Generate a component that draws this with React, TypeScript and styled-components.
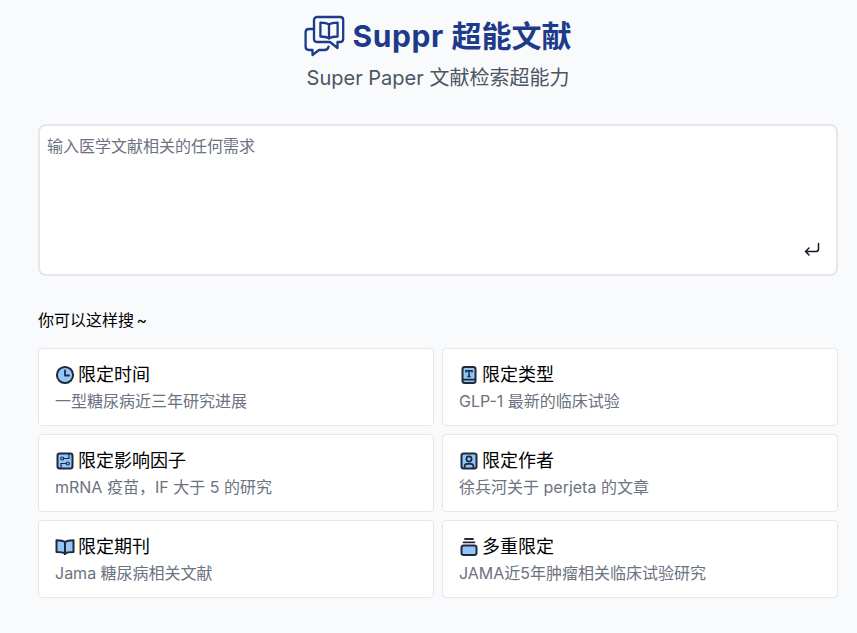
import React from "react";
import styled, { createGlobalStyle } from "styled-components";

const GlobalStyle = createGlobalStyle`
  html, body {
    margin: 0;
    padding: 0;
    background: #f9fafb;
  }
  * {
    box-sizing: border-box;
  }
  body {
    font-family: "Inter", "Noto Sans CJK SC", sans-serif;
  }
`;

const Page = styled.div`
  width: 857px;
  height: 633px;
  padding: 0 19px 0 38px;
  overflow: hidden;
`;

const Header = styled.header`
  display: flex;
  flex-direction: column;
  align-items: center;
  padding-top: 12px;
  margin-bottom: 32px;
`;

const Brand = styled.div`
  display: flex;
  align-items: center;
  gap: 6px;
  height: 48px;
`;

const BrandName = styled.h1`
  margin: 0;
  font-size: 30px;
  line-height: 48px;
  font-weight: 700;
  color: #1e3a8a;
`;

const BrandLatin = styled.span`
  letter-spacing: 0.6px;
`;

const Tagline = styled.p`
  margin: 4px 0 0;
  font-size: 20px;
  line-height: 28px;
  color: #4b5563;
`;

const SearchBox = styled.div`
  position: relative;
  height: 152px;
  background: #fff;
  border: 2px solid #e5e7eb;
  border-radius: 8px;
  padding: 8px 7px;
`;

const Input = styled.textarea`
  display: block;
  width: 100%;
  height: 100%;
  border: 0;
  outline: 0;
  resize: none;
  padding: 0;
  background: transparent;
  font: inherit;
  font-size: 16px;
  line-height: 24px;
  &::placeholder {
    color: #6b7280;
    opacity: 1;
  }
`;

const SendIcon = styled.svg`
  position: absolute;
  right: 16px;
  bottom: 16px;
  width: 16px;
  height: 16px;
`;

const SectionLabel = styled.div`
  margin-top: 32px;
  margin-bottom: 16px;
  font-size: 16px;
  line-height: 24px;
  word-spacing: -2px;
  color: #000;
`;

const Grid = styled.div`
  display: grid;
  grid-template-columns: repeat(2, 1fr);
  gap: 8px;
`;

const Card = styled.div`
  height: 78px;
  padding: 12px 16px;
  background: #fff;
  border: 1px solid #e5e7eb;
  border-radius: 4px;
`;

const CardTitle = styled.div`
  display: flex;
  align-items: center;
  gap: 3px;
  font-size: 18px;
  line-height: 28px;
  color: #000;
`;

const CardText = styled.div`
  font-size: 16px;
  line-height: 24px;
  color: #6b7280;
`;

const IconSvg = styled.svg`
  width: 20px;
  height: 20px;
  flex: none;
`;

const dark = "#1f2937";
const light = "#93c5fd";

const ClockIcon = () => (
  <IconSvg viewBox="0 0 20 20" fill="none">
    <circle cx="10" cy="10" r="8.1" fill={light} stroke={dark} strokeWidth="2" />
    <path d="M10 5.5V10.5H14" stroke={dark} strokeWidth="1.8" strokeLinecap="round" strokeLinejoin="round" />
  </IconSvg>
);

const TypeIcon = () => (
  <IconSvg viewBox="0 0 20 20" fill="none">
    <rect x="3.5" y="2" width="13" height="16" rx="2.2" fill={light} stroke={dark} strokeWidth="2" />
    <path d="M3.5 14.6H16.5" stroke={dark} strokeWidth="1.8" />
    <path d="M7 7.5V5.8H13V7.5M10 5.8V11.5M8.4 11.5H11.6" stroke={dark} strokeWidth="1.5" />
  </IconSvg>
);

const CircuitIcon = () => (
  <IconSvg viewBox="0 0 20 20" fill="none">
    <rect x="2.5" y="2.5" width="15" height="15" rx="2.2" fill={light} stroke={dark} strokeWidth="2" />
    <circle cx="7.2" cy="7.5" r="1.5" stroke={dark} strokeWidth="1.2" />
    <circle cx="12.8" cy="12.5" r="1.5" stroke={dark} strokeWidth="1.2" />
    <path d="M8.7 7.5H14V3M11.3 12.5H6V17" stroke={dark} strokeWidth="1.2" />
  </IconSvg>
);

const AuthorIcon = () => (
  <IconSvg viewBox="0 0 20 20" fill="none">
    <rect x="2.5" y="2.5" width="15" height="15" rx="2.2" fill={light} stroke={dark} strokeWidth="2" />
    <circle cx="10" cy="8" r="2.6" stroke={dark} strokeWidth="1.7" />
    <path d="M5.6 17.5V15.4C5.6 13.8 6.8 12.8 8.2 12.8H11.8C13.2 12.8 14.4 13.8 14.4 15.4V17.5" stroke={dark} strokeWidth="1.7" />
  </IconSvg>
);

const BookIcon = () => (
  <IconSvg viewBox="0 0 20 20" fill="none">
    <path d="M10 5C8.5 3.8 6.5 3.2 1.5 3.2V15C6.5 15 8.5 15.4 10 16.6C11.5 15.4 13.5 15 18.5 15V3.2C13.5 3.2 11.5 3.8 10 5Z" fill={light} stroke={dark} strokeWidth="2" strokeLinejoin="round" />
    <path d="M10 5V18" stroke={dark} strokeWidth="2" />
  </IconSvg>
);

const StackIcon = () => (
  <IconSvg viewBox="0 0 20 20" fill="none">
    <rect x="2.5" y="8.5" width="15" height="9.5" rx="2.2" fill={light} stroke={dark} strokeWidth="2" />
    <path d="M4.5 5.3H15.5M6 2H14" stroke={dark} strokeWidth="1.8" strokeLinecap="round" />
  </IconSvg>
);

const LogoIcon = () => (
  <svg width="42" height="42" viewBox="0 0 42 42" fill="none" stroke="#1e3a8a" strokeWidth="2.3" strokeLinejoin="round" strokeLinecap="round">
    <path d="M10 5C10 3.2 11.4 2 13.2 2H36C37.8 2 39.2 3.2 39.2 5V24C39.2 25.8 37.8 27 36 27H33.5V33L26 27H13.2C11.4 27 10 25.8 10 24Z" />
    <path d="M10 14H5C3 14 1.6 15.4 1.6 17.2V31.5C1.6 33.5 3 35 5 35H8.5V40L15 35H20.5C22.4 35 24 34 24.6 31.6" />
    <path d="M25 9.5C23 8 20.5 7.7 16.4 7.7V21.5C20.5 21.5 23 22 25 23.4C27 22 29.5 21.5 33.6 21.5V7.7C29.5 7.7 27 8 25 9.5Z" />
    <path d="M25 9.5V23.4" />
  </svg>
);

const items = [
  { icon: <ClockIcon />, title: "限定时间", text: "一型糖尿病近三年研究进展" },
  { icon: <TypeIcon />, title: "限定类型", text: "GLP-1 最新的临床试验" },
  { icon: <CircuitIcon />, title: "限定影响因子", text: "mRNA 疫苗，IF 大于 5 的研究" },
  { icon: <AuthorIcon />, title: "限定作者", text: "徐兵河关于 perjeta 的文章" },
  { icon: <BookIcon />, title: "限定期刊", text: "Jama 糖尿病相关文献" },
  { icon: <StackIcon />, title: "多重限定", text: "JAMA近5年肿瘤相关临床试验研究" },
];

export default function App() {
  return (
    <Page>
      <GlobalStyle />
      <Header>
        <Brand>
          <LogoIcon />
          <BrandName>
            <BrandLatin>Suppr </BrandLatin>超能文献
          </BrandName>
        </Brand>
        <Tagline>Super Paper 文献检索超能力</Tagline>
      </Header>
      <SearchBox>
        <Input placeholder="输入医学文献相关的任何需求" />
        <SendIcon viewBox="0 0 16 16" fill="none" stroke="#111827" strokeWidth="1.5" strokeLinecap="round" strokeLinejoin="round">
          <path d="M14.5 1.5V7C14.5 8.5 13.5 9.5 12 9.5H1.5M5 6L1.5 9.5L5 13" />
        </SendIcon>
      </SearchBox>
      <SectionLabel>你可以这样搜 ~</SectionLabel>
      <Grid>
        {items.map((item) => (
          <Card key={item.title}>
            <CardTitle>
              {item.icon}
              {item.title}
            </CardTitle>
            <CardText>{item.text}</CardText>
          </Card>
        ))}
      </Grid>
    </Page>
  );
}
